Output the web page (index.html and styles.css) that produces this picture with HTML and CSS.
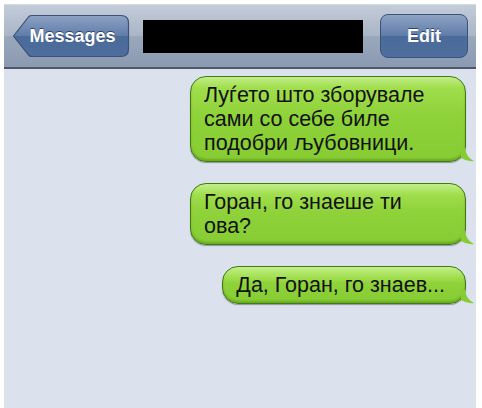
FILE: index.html
```html
<!DOCTYPE html>
<html>
  <head>
    <meta charset="utf-8" />
    <title>Messages</title>
    <link rel="stylesheet" href="styles.css">
  </head>
  <body>
    <div class="phone">
      <div class="navBar">
        <div class="backBtn">
          <svg class="backShape" width="118" height="44" viewBox="0 0 118 44">
            <defs>
              <linearGradient id="btnGrad" x1="0" y1="0" x2="0" y2="1">
                <stop offset="0" stop-color="#8ea3c4"/>
                <stop offset="0.5" stop-color="#5f7ca8"/>
                <stop offset="0.5" stop-color="#4a6a9a"/>
                <stop offset="1" stop-color="#4e6e9e"/>
              </linearGradient>
            </defs>
            <path d="M1.5 22 L17 2.5 Q18 1.5 20 1.5 L109 1.5 Q116.5 1.5 116.5 9 L116.5 35 Q116.5 42.5 109 42.5 L20 42.5 Q18 42.5 17 41.5 Z"
                  fill="url(#btnGrad)" stroke="#3c5278" stroke-width="1.2"/>
          </svg>
          <span class="btnLabel">Messages</span>
        </div>
        <div class="title"></div>
        <div class="editBtn">Edit</div>
      </div>
      <div class="thread">
        <div class="bubble wide">
          Луѓето што зборувале сами со себе биле подобри љубовници.
          <svg class="tail" width="14" height="14" viewBox="0 0 14 14"><path d="M0 0 L4 0 Q5 9 13 13 Q6 14 0 10 Z" fill="#86cc32"/></svg>
        </div>
        <div class="bubble wide">
          Горан, го знаеше ти ова?
          <svg class="tail" width="14" height="14" viewBox="0 0 14 14"><path d="M0 0 L4 0 Q5 9 13 13 Q6 14 0 10 Z" fill="#86cc32"/></svg>
        </div>
        <div class="bubble">
          Да, Горан, го знаев...
          <svg class="tail" width="14" height="14" viewBox="0 0 14 14"><path d="M0 0 L4 0 Q5 9 13 13 Q6 14 0 10 Z" fill="#86cc32"/></svg>
        </div>
      </div>
    </div>
  </body>
</html>
```

FILE: styles.css
```css
html {
  background-color: #ffffff;
}

body {
  margin: 0;
  font-family: "Liberation Sans", Arial, sans-serif;
}

.phone {
  margin: 4px 6px 0 4px;
  height: 404px;
  background-color: #dbe2ed;
  display: flex;
  flex-direction: column;
}

.navBar {
  height: 62px;
  background: linear-gradient(#c3ccd9, #a9b5c6 50%, #9aa8bc 50%, #8a9ab1);
  border-top: 1px solid #d4dbe5;
  border-bottom: 2px solid #4f5866;
  display: flex;
  align-items: center;
  padding: 0 8px 0 8px;
}

.backBtn {
  position: relative;
  width: 118px;
  height: 44px;
  display: flex;
  align-items: center;
  justify-content: center;
}

.backShape {
  position: absolute;
  left: 0;
  top: 0;
}

.btnLabel {
  position: relative;
  color: #ffffff;
  font-weight: bold;
  font-size: 18px;
  padding-left: 3px;
  text-shadow: 0 -1px 0 #2e4468;
}

.title {
  width: 220px;
  height: 33px;
  background-color: #000000;
  margin-left: 13px;
}

.editBtn {
  margin-left: auto;
  width: 86px;
  height: 42px;
  border: 1px solid #3c5278;
  border-radius: 8px;
  background: linear-gradient(#8ea3c4, #5f7ca8 50%, #4a6a9a 50%, #4e6e9e);
  color: #ffffff;
  font-weight: bold;
  font-size: 18px;
  display: flex;
  align-items: center;
  justify-content: center;
  text-shadow: 0 -1px 0 #2e4468;
}

.thread {
  display: flex;
  flex-direction: column;
  align-items: flex-end;
  padding: 7px 6px 0 0;
  gap: 21px;
}

.bubble {
  position: relative;
  margin-right: 4px;
  padding: 6px 20px 6px 13px;
  font-size: 21.5px;
  line-height: 24px;
  color: #111111;
  border: 1px solid #3f7c16;
  border-radius: 16px;
  background: linear-gradient(#c2ee8a 0, #a0de4c 11px, #8fd23a 45%, #86cc32 100%);
  box-shadow: inset 0 -2px 2px rgba(80, 140, 20, 0.5), 0 1px 1px rgba(0, 0, 0, 0.35);
}

.bubble.wide {
  width: 241px;
}

.tail {
  position: absolute;
  right: -10px;
  bottom: -1px;
}
```
